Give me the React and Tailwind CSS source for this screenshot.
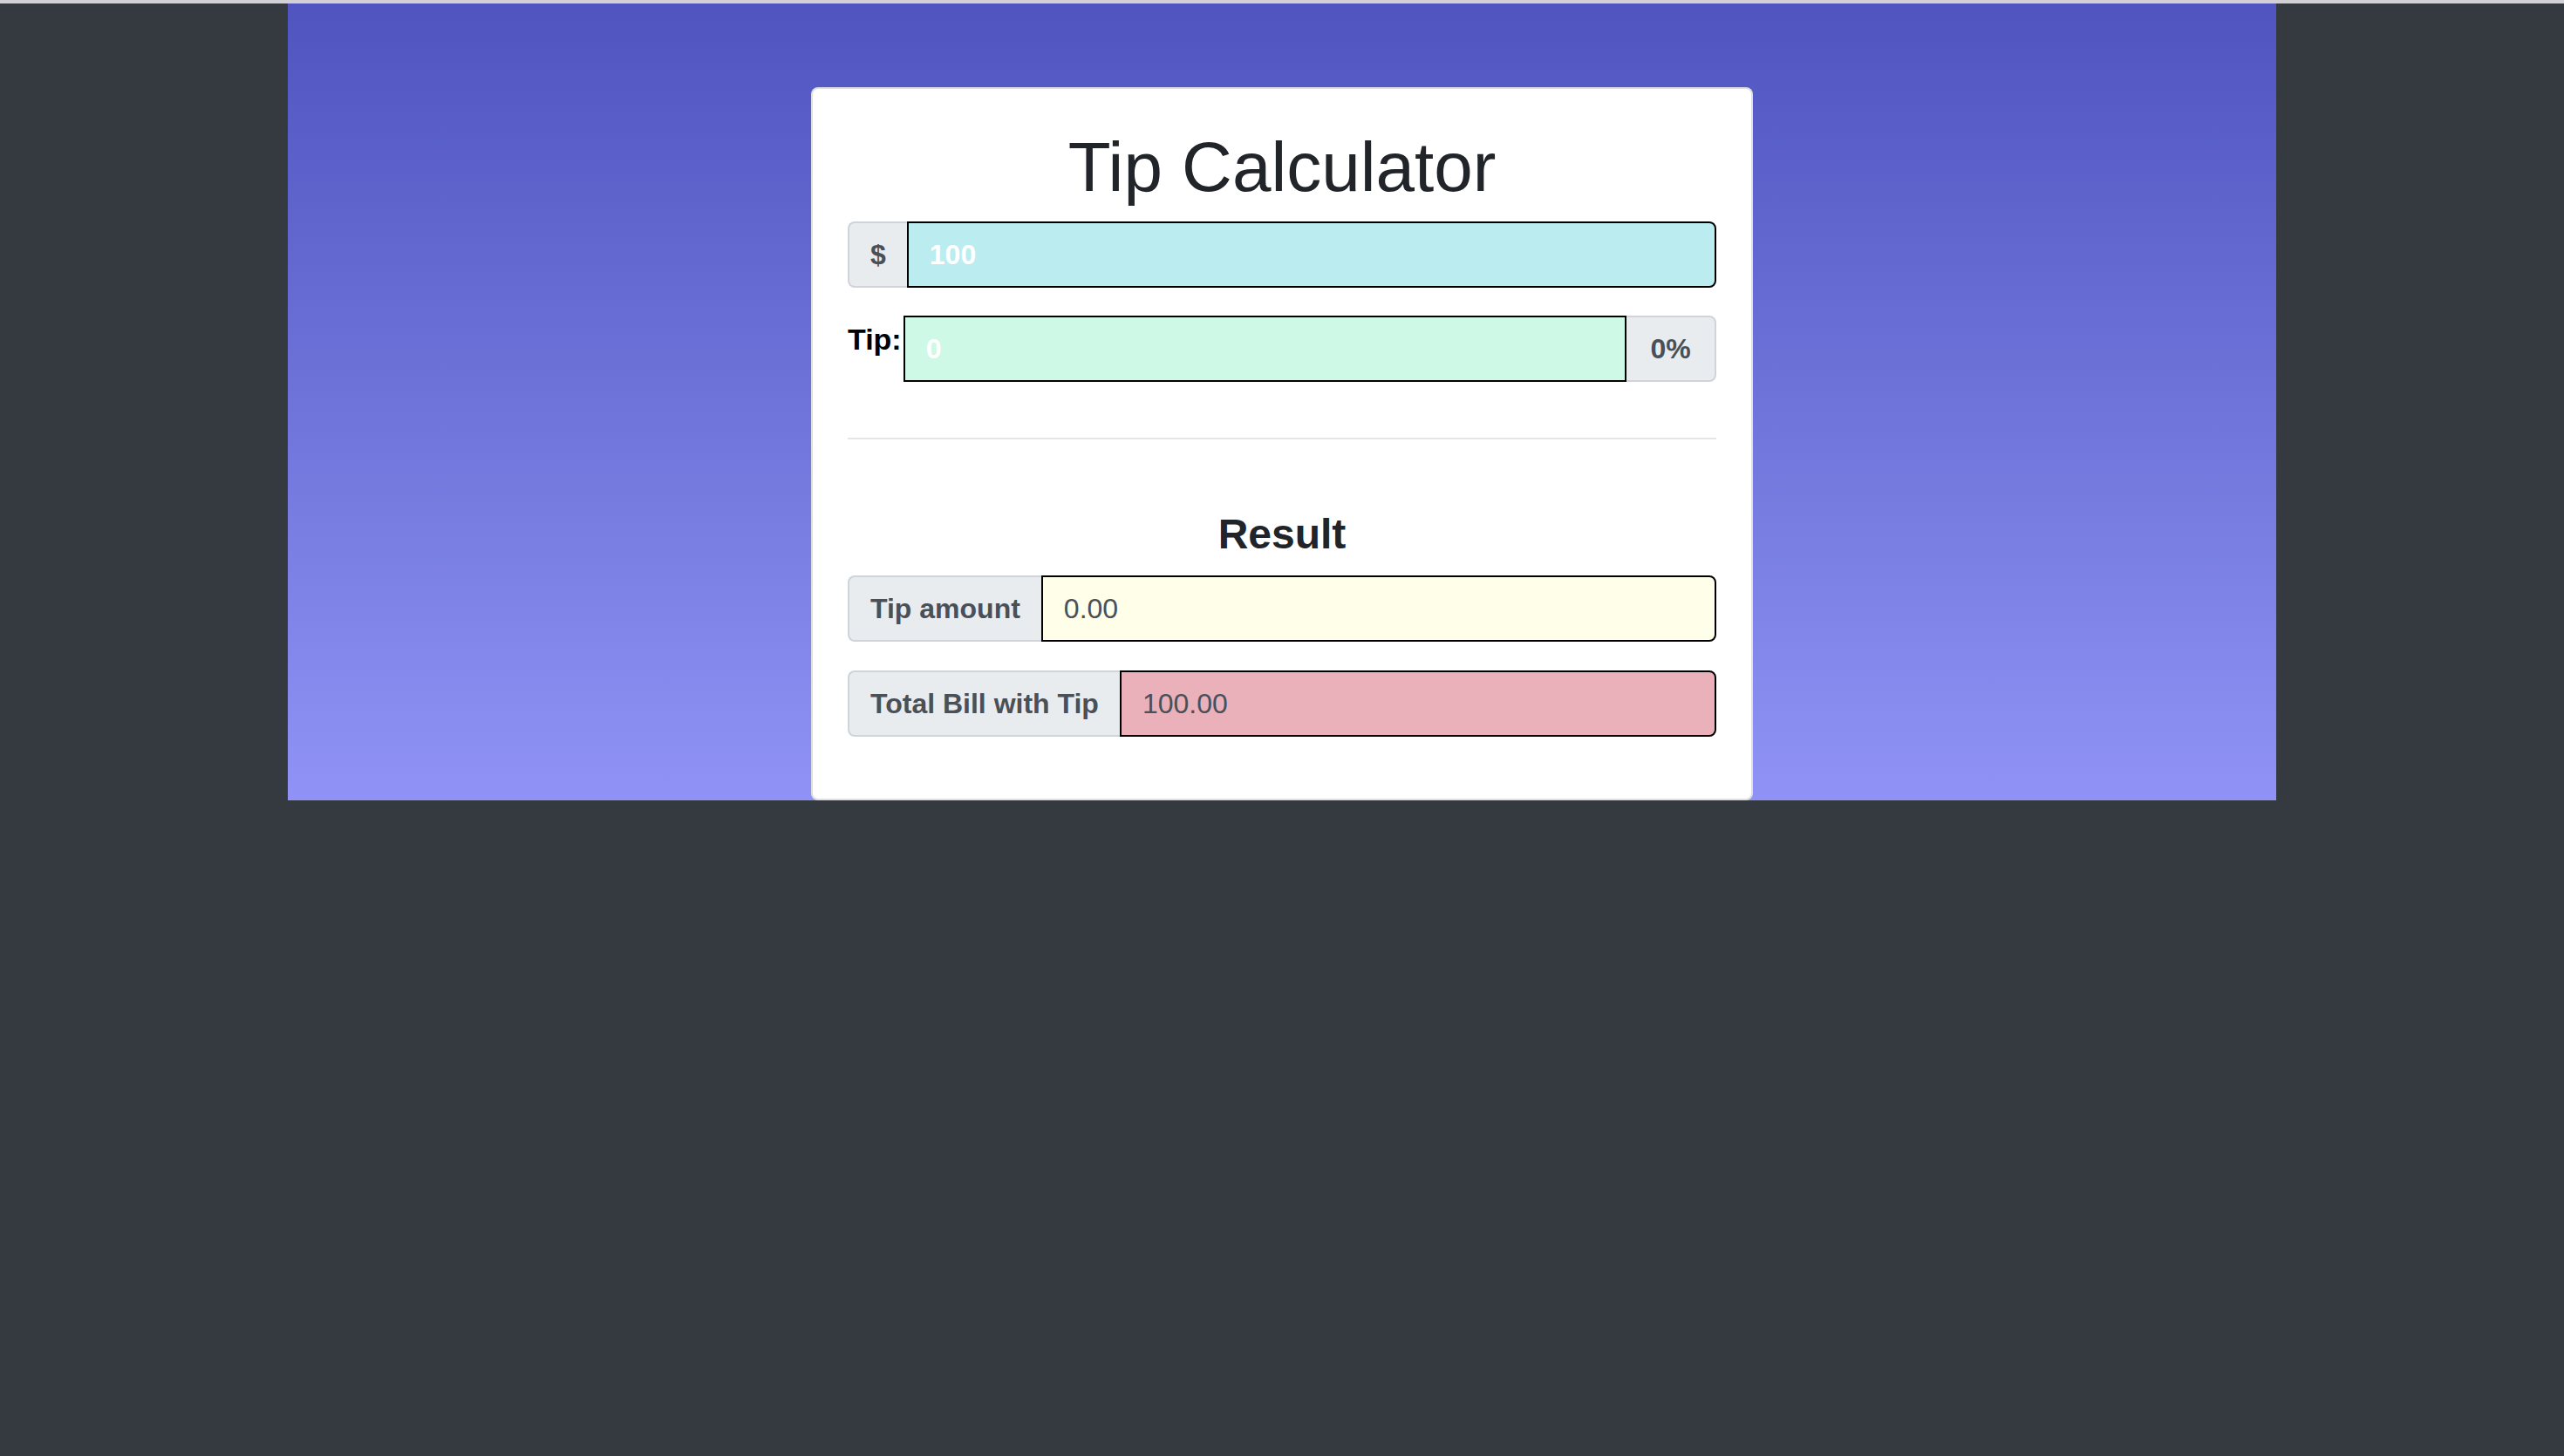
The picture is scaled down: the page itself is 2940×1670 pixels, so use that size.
import { useState } from "react";

const addon =
  "flex items-center px-[24px] bg-[#e9ecef] border-2 border-[#ced4da] text-[#495057] text-[32px] font-bold whitespace-nowrap";

const App = () => {
  const [bill, setBill] = useState("100");
  const [tip, setTip] = useState("0");
  const tipAmount = ((parseFloat(bill) || 0) * (parseFloat(tip) || 0)) / 100;
  const total = (parseFloat(bill) || 0) + tipAmount;

  return (
    <div className="min-h-screen bg-[#343a40] font-['Liberation_Sans',Arial,sans-serif]">
      <div className="h-[4px] bg-[#d0d0d5]"></div>
      <div className="mx-auto w-[2280px] bg-linear-to-b from-[#4f54bf] to-[#9093f5] pt-[96px]">
        <div className="mx-auto w-[1080px] bg-white border-2 border-[rgba(0,0,0,0.125)] rounded-[8px] p-[40px] pb-[41px]">
          <h1 className="text-center text-[80px] leading-[96px] text-[#212529] mt-[2px] mb-[14px]">Tip Calculator</h1>

          <div className="flex h-[76px] mb-[32px]">
            <div className={cn(addon, "rounded-l-[8px] border-r-0")}>$</div>
            <input
              value={bill}
              onChange={(e) => setBill(e.target.value)}
              className="flex-1 min-w-0 bg-[#bbedf0] border-2 border-black rounded-r-[8px] px-[24px] text-[32px] font-bold text-white outline-none"
            />
          </div>

          <div className="flex h-[76px]">
            <label className="text-[34px] font-bold text-black leading-[48px] pt-[3px] pr-[2px]">Tip:</label>
            <input
              value={tip}
              onChange={(e) => setTip(e.target.value)}
              className="flex-1 min-w-0 bg-[#cef9e6] border-2 border-black px-[24px] text-[32px] font-bold text-white outline-none"
            />
            <div className={cn(addon, "w-[103px] justify-center px-0 rounded-r-[8px] border-l-0")}>{tip || 0}%</div>
          </div>

          <hr className="mt-[64px] border-0 h-[2px] bg-[#e6e6e6]" />

          <h4 className="mt-[80px] mb-[18px] text-center text-[48px] leading-[58px] font-bold text-[#212529]">Result</h4>

          <div className="flex h-[76px] mb-[33px]">
            <div className={cn(addon, "rounded-l-[8px] border-r-0")}>Tip amount</div>
            <input
              readOnly
              value={tipAmount.toFixed(2)}
              className="flex-1 min-w-0 bg-[#fefee9] border-2 border-black rounded-r-[8px] px-[24px] text-[32px] text-[#495057] outline-none"
            />
          </div>

          <div className="flex h-[76px] mb-[30px]">
            <div className={cn(addon, "rounded-l-[8px] border-r-0")}>Total Bill with Tip</div>
            <input
              readOnly
              value={total.toFixed(2)}
              className="flex-1 min-w-0 bg-[#eab1bb] border-2 border-black rounded-r-[8px] px-[24px] text-[32px] text-[#495057] outline-none"
            />
          </div>
        </div>
      </div>
    </div>
  );
};

const cn = (...c) => c.filter(Boolean).join(" ");

export default App;
